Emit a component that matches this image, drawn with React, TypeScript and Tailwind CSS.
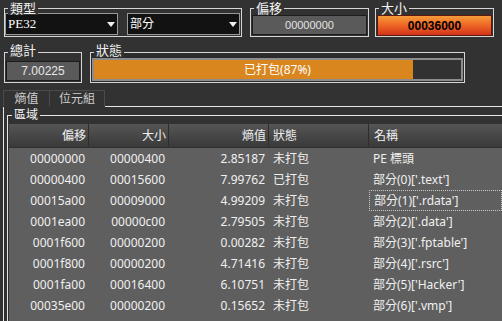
import React from "react";

type Row = [string, string, string, string, string];

const rows: Row[] = [
  ["00000000", "00000400", "2.85187", "未打包", "PE 標頭"],
  ["00000400", "00015600", "7.99762", "已打包", "部分(0)['.text']"],
  ["00015a00", "00009000", "4.99209", "未打包", "部分(1)['.rdata']"],
  ["0001ea00", "00000c00", "2.79505", "未打包", "部分(2)['.data']"],
  ["0001f600", "00000200", "0.00282", "未打包", "部分(3)['.fptable']"],
  ["0001f800", "00000200", "4.71416", "未打包", "部分(4)['.rsrc']"],
  ["0001fa00", "00016400", "6.10751", "未打包", "部分(5)['Hacker']"],
  ["00035e00", "00000200", "0.15652", "未打包", "部分(6)['.vmp']"],
];

const cjk = "font-['Noto_Sans','Noto_Sans_CJK_TC',sans-serif]";

// group box with a caption sitting on its top border
const Group: React.FC<{
  label: string;
  className?: string;
  labelTop?: string;
  children: React.ReactNode;
}> = ({ label, className = "", labelTop = "-top-[8px]", children }) => (
  <div className={`relative border border-[#d6d6d6] ${className}`}>
    <span
      className={`absolute ${labelTop} left-[3px] px-[2px] bg-[#323232] text-[13px] leading-[14px] text-[#f2f2f2] ${cjk}`}
    >
      {label}
    </span>
    {children}
  </div>
);

const Combo: React.FC<{ text: string; serif?: boolean }> = ({ text, serif }) => (
  <div className="flex items-center w-[113px] h-[22px] border border-[#9a9a9a] bg-[#121212] pl-[2px]">
    <span
      className={`flex-1 text-[12px] text-white ${
        serif ? "font-['Liberation_Serif',serif] text-[13px]" : cjk
      }`}
    >
      {text}
    </span>
    <div className="flex items-center justify-center w-[13px] h-full">
      <svg width="8" height="5" viewBox="0 0 8 5">
        <path d="M0 0h8L4 5z" fill="#f0f0f0" />
      </svg>
    </div>
  </div>
);

export default function App() {
  return (
    <div className={`w-[502px] h-[321px] overflow-hidden bg-[#323232] flex flex-col ${cjk}`}>
      {/* row 1 */}
      <div className="flex pt-[8px] pl-[4px]">
        <Group label="類型" className="w-[238px] h-[29px] pt-[4px] flex gap-[9px]">
          <Combo text="PE32" serif />
          <Combo text="部分" />
        </Group>
        <Group label="偏移" className="ml-[8px] w-[119px] h-[29px] pt-[6px] px-[1px]">
          <div className="h-[20px] border border-[#1c1c1c] bg-[#5a5a5a] flex items-center justify-center text-[11px] text-[#e4e4e4] font-['Liberation_Sans',sans-serif]">
            00000000
          </div>
        </Group>
        <Group label="大小" className="ml-[6px] w-[119px] h-[29px] pt-[6px] px-[1px]">
          <div className="h-[21px] border border-[#5a1a10] bg-linear-to-b from-[#f59a3a] via-[#ee6424] to-[#d2321a] flex items-center justify-center text-[12px] font-bold text-black font-['Liberation_Sans',sans-serif]">
            00036000
          </div>
        </Group>
      </div>

      {/* row 2 */}
      <div className="flex mt-[15px] pl-[4px]">
        <Group label="總計" labelTop="-top-[10px]" className="w-[78px] h-[31px] pt-[8px] px-[1px]">
          <div className="h-[20px] border border-[#1c1c1c] bg-[#5a5a5a] flex items-center justify-center text-[12px] text-[#e8e8e8] font-['Liberation_Sans',sans-serif]">
            7.00225
          </div>
        </Group>
        <Group label="狀態" labelTop="-top-[10px]" className="ml-[8px] w-[375px] h-[31px] pt-[5px] px-[1px] bg-[#2b2b2b]">
          <div className="grid h-[23px] border-2 border-[#8c8c8c] bg-[#323232]">
            <div className="[grid-area:1/1] h-full bg-[#d9861e]" style={{ width: "87%" }} />
            <div className="[grid-area:1/1] flex items-center justify-center text-[12px] text-white">
              已打包(87%)
            </div>
          </div>
        </Group>
      </div>

      {/* tabs */}
      <div className="flex mt-[7px] h-[17px]">
        <div className="ml-[3px] flex h-[16px] border-t border-l border-[#4a4a4a] text-[12px] leading-[15px] text-[#cfcfcf]">
          <div className="w-[46px] text-center border-r border-[#4a4a4a]">熵值</div>
          <div className="w-[55px] text-center border-r border-[#4a4a4a]">位元組</div>
        </div>
        <div className="flex-1 border-b border-[#e6e6e6]" />
      </div>

      {/* tab page */}
      <div className="flex-1 flex flex-col ml-[3px] border-l border-[#e6e6e6]">
        <div className="relative flex-1 flex flex-col ml-[3px] mt-[8px] border-l border-t border-[#e6e6e6] pt-[8px] pl-[1px]">
          <span className="absolute -top-[8px] left-[4px] px-[2px] bg-[#323232] text-[12px] leading-[14px] text-[#f2f2f2]">
            區域
          </span>
          <div className="flex-1 bg-[#5f5f5f] text-[12px] text-[#f0f0f0]">
            <div className="flex h-[24px] items-center bg-linear-to-b from-[#555555] via-[#474747] to-[#3a3a3a] border-b border-[#2e2e2e]">
              <div className="w-[80px] h-full flex items-center justify-end pr-[2px] border-r border-[#2e2e2e]">偏移</div>
              <div className="w-[80px] h-full flex items-center justify-end pr-[2px] border-r border-[#2e2e2e]">大小</div>
              <div className="w-[100px] h-full flex items-center justify-end pr-[2px] border-r border-[#2e2e2e]">熵值</div>
              <div className="w-[100px] h-full flex items-center pl-[4px] border-r border-[#2e2e2e]">狀態</div>
              <div className="flex-1 h-full flex items-center pl-[5px]">名稱</div>
            </div>
            {rows.map((r, i) => (
              <div key={i} className="flex h-[21px] items-center">
                <div className="w-[80px] text-right pr-[4px]">{r[0]}</div>
                <div className="w-[80px] text-right pr-[4px]">{r[1]}</div>
                <div className="w-[100px] text-right pr-[4px]">{r[2]}</div>
                <div className="w-[100px] pl-[4px]">{r[3]}</div>
                <div
                  className={`flex-1 h-full flex items-center pl-[4px] ${
                    i === 2 ? "border border-dotted border-[#c8c8c8]" : ""
                  }`}
                >
                  {r[4]}
                </div>
              </div>
            ))}
          </div>
        </div>
      </div>
    </div>
  );
}
